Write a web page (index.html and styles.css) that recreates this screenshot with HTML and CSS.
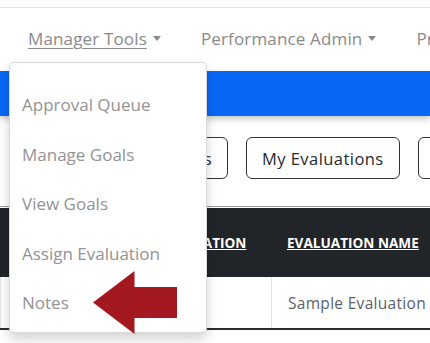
FILE: index.html
```html
<!DOCTYPE html>
<html>
<head>
<meta charset="utf-8">
<link rel="stylesheet" href="styles.css">
</head>
<body>
<div class="topbar"></div>
<nav class="nav">
  <a class="nav-item active">Manager Tools <span class="caret"></span></a>
  <a class="nav-item">Performance Admin <span class="caret"></span></a>
  <a class="nav-item">Profile</a>
</nav>
<div class="bluebar"></div>
<div class="btn-row">
  <div class="btn btn-first">Team Evaluations</div>
  <div class="btn">My Evaluations</div>
  <div class="btn">Archived</div>
</div>
<div class="table">
  <div class="thead">
    <div class="th">NAME</div>
    <div class="th">EVALUATION</div>
    <div class="th">EVALUATION NAME</div>
  </div>
  <div class="trow">
    <div class="td"></div>
    <div class="td"></div>
    <div class="td">Sample Evaluation</div>
  </div>
</div>
<ul class="dropdown">
  <li>Approval Queue</li>
  <li>Manage Goals</li>
  <li>View Goals</li>
  <li>Assign Evaluation</li>
  <li>Notes</li>
</ul>
<svg class="arrow" width="84" height="63" viewBox="0 0 84 63"><polygon points="0,31.5 41.5,0 41.5,16 84,16 84,47 41.5,47 41.5,63" fill="#a3191f"/></svg>
</body>
</html>
```
FILE: styles.css
```css
html, body {
  margin: 0;
  padding: 0;
  background: #fff;
  overflow: hidden;
  font-family: "Open Sans", "Liberation Sans", sans-serif;
}
.topbar {
  height: 7px;
  border-bottom: 1px solid #e2e2e2;
}
.nav {
  display: flex;
  align-items: center;
  height: 63px;
  padding-left: 28px;
  gap: 40px;
  white-space: nowrap;
  overflow: hidden;
}
.nav-item {
  flex-shrink: 0;
  font-size: 17px;
  letter-spacing: 0.15px;
  color: #8a8a8a;
  display: flex;
  align-items: center;
  margin-top: -3px;
}
.nav-item.active {
  text-decoration: underline;
  text-underline-offset: 3px;
  text-decoration-thickness: 1px;
}
.caret {
  display: inline-block;
  width: 0;
  height: 0;
  border-left: 4.5px solid transparent;
  border-right: 4.5px solid transparent;
  border-top: 5px solid #8a8a8a;
  margin-left: 6px;
}
.bluebar {
  height: 45px;
  background: #0867f5;
  box-shadow: 0 3px 6px rgba(0,0,0,0.22);
}
.btn-row {
  display: flex;
  gap: 18px;
  margin-top: 21px;
  padding-left: 20px;
  white-space: nowrap;
  overflow: hidden;
}
.btn {
  flex-shrink: 0;
  height: 42px;
  box-sizing: border-box;
  border: 1px solid #333;
  border-radius: 6px;
  padding: 0 15px;
  display: flex;
  align-items: center;
  font-size: 16.5px;
  letter-spacing: 0.45px;
  color: #24292f;
}
.btn-first {
  width: 208px;
  justify-content: flex-end;
}
.table {
  margin-top: 27px;
  border-top: 1px solid #9a9a9a;
}
.thead, .trow {
  display: grid;
  grid-template-columns: 143px 128px 1fr;
}
.thead {
  height: 69px;
  background: #212529;
  border-top: 1px solid #fff;
}
.th {
  display: flex;
  align-items: center;
  padding-left: 16px;
  font-size: 13.6px;
  font-weight: 700;
  color: #fff;
  text-decoration: underline;
  white-space: nowrap;
}
.trow {
  height: 51px;
  border-bottom: 2px solid #2a2d31;
}
.td {
  display: flex;
  align-items: center;
  padding-left: 16px;
  font-size: 15.5px;
  letter-spacing: 0.3px;
  color: #5b6169;
  border-left: 1px solid #e3e3e3;
  white-space: nowrap;
}
.dropdown {
  position: absolute;
  left: 9px;
  top: 62px;
  width: 198px;
  height: 271px;
  box-sizing: border-box;
  margin: 0;
  padding: 17px 0 0;
  list-style: none;
  background: #fff;
  border: 1px solid rgba(0,0,0,0.15);
  border-radius: 5px;
  box-shadow: 0 6px 12px rgba(0,0,0,0.175);
}
.dropdown li {
  height: 49.5px;
  display: flex;
  align-items: center;
  padding-left: 12px;
  font-size: 17px;
  color: #939393;
  white-space: nowrap;
}
.arrow {
  position: absolute;
  left: 93px;
  top: 271px;
}
```
